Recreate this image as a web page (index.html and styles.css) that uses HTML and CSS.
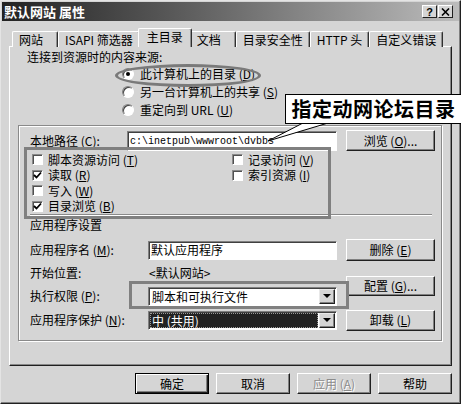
FILE: index.html
```html
<!DOCTYPE html>
<html lang="zh-CN">
<head>
    <meta charset="UTF-8">
    <title>默认网站 属性</title>
    <link rel="stylesheet" href="styles.css">
</head>
<body>
<div class="dialog">
    <div class="dialog__title">
        <span class="dialog__caption">默认网站&nbsp;属性</span>
        <div class="dialog__controls">
            <span class="ctl">?</span>
            <span class="ctl">
                <svg width="9" height="8" viewBox="0 0 9 8"><path d="M1 0.5 L8 7.5 M8 0.5 L1 7.5" stroke="#000" stroke-width="1.6"/></svg>
            </span>
        </div>
    </div>

    <div class="tabs">
        <div class="tab">网站</div>
        <div class="tab">ISAPI 筛选器</div>
        <div class="tab tab--active">主目录</div>
        <div class="tab">文档</div>
        <div class="tab">目录安全性</div>
        <div class="tab">HTTP 头</div>
        <div class="tab">自定义错误</div>
    </div>

    <div class="panel">
        <div class="source__label">连接到资源时的内容来源:</div>
        <div class="radios">
            <div class="radio"><span class="radio__dot radio__dot--on"></span>此计算机上的目录 (<u>D</u>)</div>
            <div class="radio"><span class="radio__dot"></span>另一台计算机上的共享 (<u>S</u>)</div>
            <div class="radio"><span class="radio__dot"></span>重定向到 URL (<u>U</u>)</div>
        </div>

        <div class="frame">
            <div class="path-row">
                <span class="path-row__label">本地路径 (<u>C</u>):</span>
                <div class="field field--path">c:\inetpub\wwwroot\dvbbs</div>
                <div class="btn btn--side">浏览 (<u>O</u>)...</div>
            </div>

            <div class="checks">
                <div class="check"><span class="check__box"></span>脚本资源访问 (<u>T</u>)</div>
                <div class="check"><span class="check__box"></span>记录访问 (<u>V</u>)</div>
                <div class="check"><span class="check__box check__box--on"><svg width="9" height="9" viewBox="0 0 9 9"><path d="M1 4 L3.5 6.5 L8 1.5" fill="none" stroke="#000" stroke-width="1.8"/></svg></span>读取 (<u>R</u>)</div>
                <div class="check"><span class="check__box"></span>索引资源 (<u>I</u>)</div>
                <div class="check"><span class="check__box"></span>写入 (<u>W</u>)</div>
                <div></div>
                <div class="check"><span class="check__box check__box--on"><svg width="9" height="9" viewBox="0 0 9 9"><path d="M1 4 L3.5 6.5 L8 1.5" fill="none" stroke="#000" stroke-width="1.8"/></svg></span>目录浏览 (<u>B</u>)</div>
            </div>

            <div class="sep"></div>
            <div class="app__title">应用程序设置</div>

            <div class="app">
                <span class="app__label">应用程序名 (<u>M</u>):</span>
                <div class="field field--app">默认应用程序</div>
                <div class="btn btn--side btn--tall">删除 (<u>E</u>)</div>

                <span class="app__label">开始位置:</span>
                <span class="app__value">&lt;默认网站&gt;</span>
                <div class="btn btn--side btn--config">配置 (<u>G</u>)...</div>

                <span class="app__label">执行权限 (<u>P</u>):</span>
                <div class="select">
                    <span class="select__value">脚本和可执行文件</span>
                    <span class="select__arrow"></span>
                </div>

                <span class="app__label">应用程序保护 (<u>N</u>):</span>
                <div class="select">
                    <span class="select__value select__value--picked">中 (共用)</span>
                    <span class="select__arrow"></span>
                </div>
                <div class="btn btn--side">卸载 (<u>L</u>)</div>
            </div>
        </div>
    </div>

    <div class="footer">
        <div class="btn btn--foot btn--default">确定</div>
        <div class="btn btn--foot">取消</div>
        <div class="btn btn--foot btn--disabled">应用 (<u>A</u>)</div>
        <div class="btn btn--foot">帮助</div>
    </div>

    <!-- annotations drawn over the screenshot -->
    <div class="mark mark--ellipse"></div>
    <div class="mark mark--checks"></div>
    <div class="mark mark--exec"></div>
    <svg class="callout__tail" width="70" height="30" viewBox="0 0 70 30">
        <polygon points="41,1 6,19 66,1" fill="#fff"/>
        <path d="M41 1 L6 19 L66 1" fill="none" stroke="#000" stroke-width="1"/>
    </svg>
    <div class="callout">指定动网论坛目录</div>
</div>
</body>
</html>
```

FILE: styles.css
```css
* {
    box-sizing: border-box;
}

body {
    margin: 0;
    background-color: #d5d5d5;
    font: 12px "Noto Sans CJK SC", "Noto Sans", sans-serif;
    color: #000;
}

u {
    text-decoration-thickness: 1px;
    text-underline-offset: 1px;
}

.dialog {
    position: relative;
    width: 461px;
    height: 404px;
    padding: 1px;
    background-color: #d5d5d5;
    border: 1px solid;
    border-color: #e4e4e4 #202020 #202020 #e4e4e4;
    box-shadow: inset -1px -1px 0 #808080;
    line-height: 14px;
}

.dialog__title {
    display: flex;
    align-items: center;
    justify-content: space-between;
    height: 19px;
    padding: 0 6px 0 2px;
    background: linear-gradient(to right, #222 0%, #555 35%, #bcbcbc 100%);
    color: #fff;
    font-weight: bold;
    font-size: 13px;
}

.dialog__controls {
    display: flex;
    gap: 1px;
}

.ctl {
    display: flex;
    align-items: center;
    justify-content: center;
    width: 15px;
    height: 13px;
    background-color: #d5d5d5;
    border: 1px solid;
    border-color: #fff #202020 #202020 #fff;
    color: #000;
    font: bold 11px "Liberation Sans", sans-serif;
}

/* tab strip */
.tabs {
    position: relative;
    z-index: 1;
    display: flex;
    align-items: flex-end;
    height: 19px;
    margin: 7px 0 -1px 10px;
}

.tab {
    min-width: 46px;
    height: 16px;
    padding: 0 6px;
    line-height: 15px;
    white-space: nowrap;
    border: 1px solid;
    border-color: #fff #303030 transparent #fff;
    border-bottom: none;
    border-radius: 2px 2px 0 0;
    box-shadow: inset -1px 0 0 #909090;
    background-color: #d5d5d5;
}

.tab--active {
    position: relative;
    z-index: 2;
    height: 19px;
    margin: 0 -2px;
    padding: 0 8px;
    line-height: 16px;
}

.panel {
    height: 320px;
    margin: 0 7px;
    border: 1px solid;
    border-color: #fff #202020 #202020 #fff;
    box-shadow: inset -1px -1px 0 #888;
}

.source__label {
    padding: 3px 0 0 17px;
}

.radios {
    margin: 1px 0 0 112px;
}

.radio {
    display: flex;
    align-items: center;
    height: 18px;
}

.radio__dot {
    display: flex;
    align-items: center;
    justify-content: center;
    width: 12px;
    height: 12px;
    margin-right: 6px;
    border-radius: 50%;
    background-color: #fff;
    border: 1px solid;
    border-color: #808080 #fff #fff #808080;
    box-shadow: inset 1px 1px 0 #404040;
}

.radio__dot--on::after {
    content: "";
    width: 4px;
    height: 4px;
    border-radius: 50%;
    background-color: #000;
}

/* group frame */
.frame {
    height: 216px;
    margin: 6px 9px 0 8px;
    padding: 4px 6px 0 11px;
    border: 1px solid #8a8a8a;
    box-shadow: inset 1px 1px 0 #fff, 1px 1px 0 #fff;
}

.path-row {
    display: flex;
    align-items: center;
    height: 21px;
}

.path-row__label {
    width: 97px;
}

.field {
    height: 20px;
    padding: 2px 0 0 2px;
    background-color: #fff;
    border: 1px solid;
    border-color: #808080 #fff #fff #808080;
    box-shadow: inset 1px 1px 0 #404040;
    white-space: nowrap;
    overflow: hidden;
}

.field--path {
    width: 210px;
    font: 10px "Liberation Mono", monospace;
    line-height: 16px;
}

.field--app {
    height: 19px;
    padding-top: 1px;
}

.btn {
    display: flex;
    align-items: center;
    justify-content: center;
    height: 21px;
    background-color: #d5d5d5;
    border: 1px solid;
    border-color: #fff #202020 #202020 #fff;
    box-shadow: inset -1px -1px 0 #808080;
    white-space: nowrap;
}

.btn--side {
    width: 89px;
    margin-left: 9px;
}

.btn--tall {
    height: 22px;
}

.btn--config {
    grid-row: 2 / 4;
    grid-column: 3;
    height: 20px;
    margin-top: 3px;
}

.checks {
    display: grid;
    grid-template-columns: 200px 1fr;
    grid-auto-rows: 15.5px;
    margin-top: 1px;
    padding-left: 2px;
}

.check {
    display: flex;
    align-items: center;
}

.check__box {
    display: flex;
    align-items: center;
    justify-content: center;
    width: 11px;
    height: 11px;
    margin-right: 5px;
    background-color: #fff;
    border: 1px solid;
    border-color: #8a8a8a #fff #fff #8a8a8a;
    box-shadow: inset 1px 1px 0 #505050;
}

.sep {
    height: 2px;
    margin: 0 3px 0 0;
    border-top: 1px solid #8a8a8a;
    border-bottom: 1px solid #fff;
}

.app__title {
    margin-top: 2px;
}

.app {
    display: grid;
    grid-template-columns: 118px 189px 98px;
    grid-template-rows: 22px 23px 24px 24px;
    align-items: center;
    margin-top: 7px;
}

.app__value {
    padding-left: 1px;
}

.select {
    display: flex;
    align-items: center;
    height: 19px;
    padding: 1px;
    background-color: #fff;
    border: 1px solid;
    border-color: #808080 #fff #fff #808080;
    box-shadow: inset 1px 1px 0 #404040;
}

.select__value {
    flex: 1;
    height: 15px;
    padding-left: 2px;
    line-height: 15px;
}

.select__value--picked {
    background-color: #222;
    color: #fff;
    outline: 1px dotted #999;
    outline-offset: -1px;
}

.select__arrow {
    display: flex;
    align-items: center;
    justify-content: center;
    width: 16px;
    height: 15px;
    margin-left: 1px;
    background-color: #d5d5d5;
    border: 1px solid;
    border-color: #e8e8e8 #202020 #202020 #e8e8e8;
    box-shadow: inset -1px -1px 0 #808080;
}

.select__arrow::after {
    content: "";
    border-left: 4px solid transparent;
    border-right: 4px solid transparent;
    border-top: 4px solid #000;
}

.footer {
    display: flex;
    justify-content: flex-end;
    gap: 7px;
    margin-top: 7px;
    padding-right: 7px;
}

.btn--foot {
    width: 74px;
}

.btn--default {
    border: 1px solid #000;
    box-shadow: inset 1px 1px 0 #fff, inset -1px -1px 0 #202020, inset -2px -2px 0 #808080;
}

.btn--disabled {
    color: #8c8c8c;
    text-shadow: 1px 1px 0 #fff;
}

/* annotations */
.mark {
    position: absolute;
    border: 3px solid #808080;
}

.mark--ellipse {
    left: 114px;
    top: 63px;
    width: 146px;
    height: 23px;
    border-radius: 50%;
    border-color: #7a7a7a;
}

.mark--checks {
    left: 23px;
    top: 146px;
    width: 307px;
    height: 72px;
}

.mark--exec {
    left: 128px;
    top: 280px;
    width: 220px;
    height: 28px;
}

.callout {
    position: absolute;
    left: 284px;
    top: 93px;
    width: 177px;
    height: 30px;
    background-color: #fff;
    border: 1px solid #000;
    font-size: 20px;
    font-weight: bold;
    line-height: 27px;
    text-align: center;
    letter-spacing: 0.5px;
}

.callout__tail {
    position: absolute;
    left: 261px;
    top: 121px;
}
```
